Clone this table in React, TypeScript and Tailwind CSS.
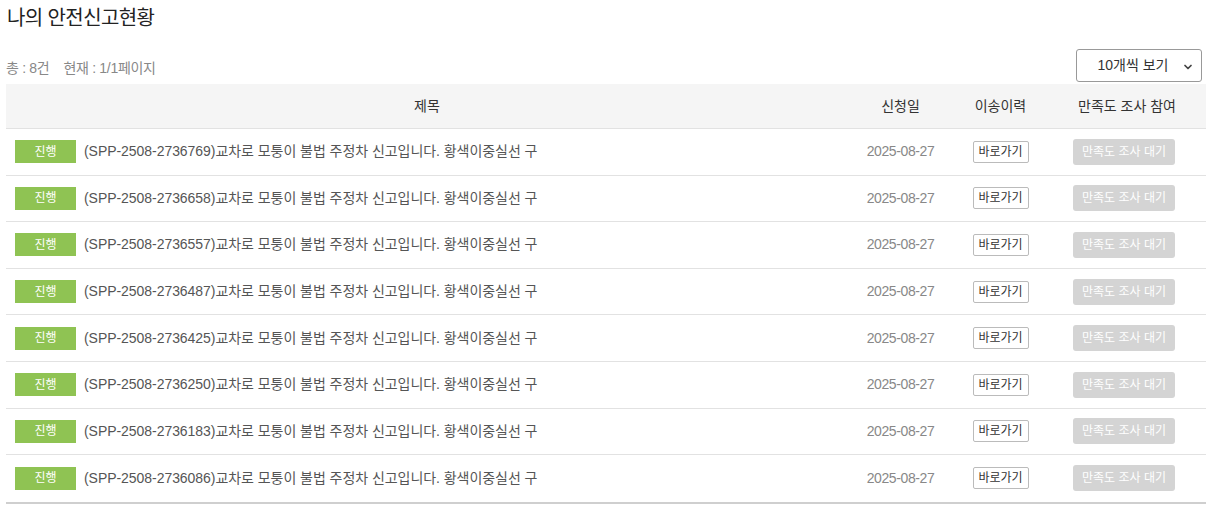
import React from 'react';
import { ChevronDown } from 'lucide-react';

const reports = [
  '2736769',
  '2736658',
  '2736557',
  '2736487',
  '2736425',
  '2736250',
  '2736183',
  '2736086',
];

export default function App() {
  return (
    <div className="w-[1222px] h-[508px] bg-white px-[6px] font-['Liberation_Sans','Noto_Sans_CJK_KR',sans-serif] text-[#333]">
      {/* Title */}
      <h2 className="pt-[4px] pl-px text-[20px] leading-[28px] tracking-[-0.6px] text-[#222]">나의 안전신고현황</h2>

      {/* Summary + page size */}
      <div className="mt-[17px] flex items-end justify-between pr-[14px]">
        <p className="pb-[5px] text-[14px] leading-[18px] tracking-[-0.3px] text-[#888]">
          총 : 8건<span className="ml-[14px]">현재 : 1/1페이지</span>
        </p>
        <div className="relative flex h-[33px] w-[126px] items-center rounded-[3px] border border-[#999] text-[14px] text-[#333]">
          <span className="w-full pr-[12px] text-center">10개씩 보기</span>
          <ChevronDown size={12} strokeWidth={3.5} className="absolute right-[7px] top-[11px] text-[#444]" />
        </div>
      </div>

      {/* Table */}
      <div className="mt-[2px] w-[1200px] border-b-2 border-[#cfcfcf]">
        <div className="grid h-[45px] grid-cols-[842px_105px_95px_158px] items-center border-b border-[#e2e2e2] bg-[#f5f5f5] text-[14px] text-[#333]">
          <span className="text-center">제목</span>
          <span className="text-center">신청일</span>
          <span className="text-center">이송이력</span>
          <span className="text-center">만족도 조사 참여</span>
        </div>
        {reports.map((id, i) => (
          <div
            key={id}
            className={`grid h-[46.6px] grid-cols-[842px_105px_95px_158px] items-center text-[14px] ${
              i < reports.length - 1 ? 'border-b border-[#e2e2e2]' : ''
            }`}
          >
            <div className="flex items-center">
              <span className="ml-[9px] flex h-[23px] w-[61px] items-center justify-center bg-[#8fc353] text-[12px] text-white">
                진행
              </span>
              <span className="ml-[8px] tracking-[-0.05px] text-[#555]">
                (SPP-2508-{id})교차로 모퉁이 불법 주정차 신고입니다. 황색이중실선 구
              </span>
            </div>
            <span className="text-center tracking-[-0.4px] text-[#888]">2025-08-27</span>
            <div className="flex justify-center">
              <span className="flex h-[22px] w-[56px] items-center justify-center rounded-[2px] border border-[#bbb] text-[12px] text-[#333]">
                바로가기
              </span>
            </div>
            <div className="flex justify-center pr-[6px]">
              <span className="flex h-[26px] w-[102px] items-center justify-center rounded-[3px] bg-[#d4d4d4] text-[12px] text-white">
                만족도 조사 대기
              </span>
            </div>
          </div>
        ))}
      </div>
    </div>
  );
}
